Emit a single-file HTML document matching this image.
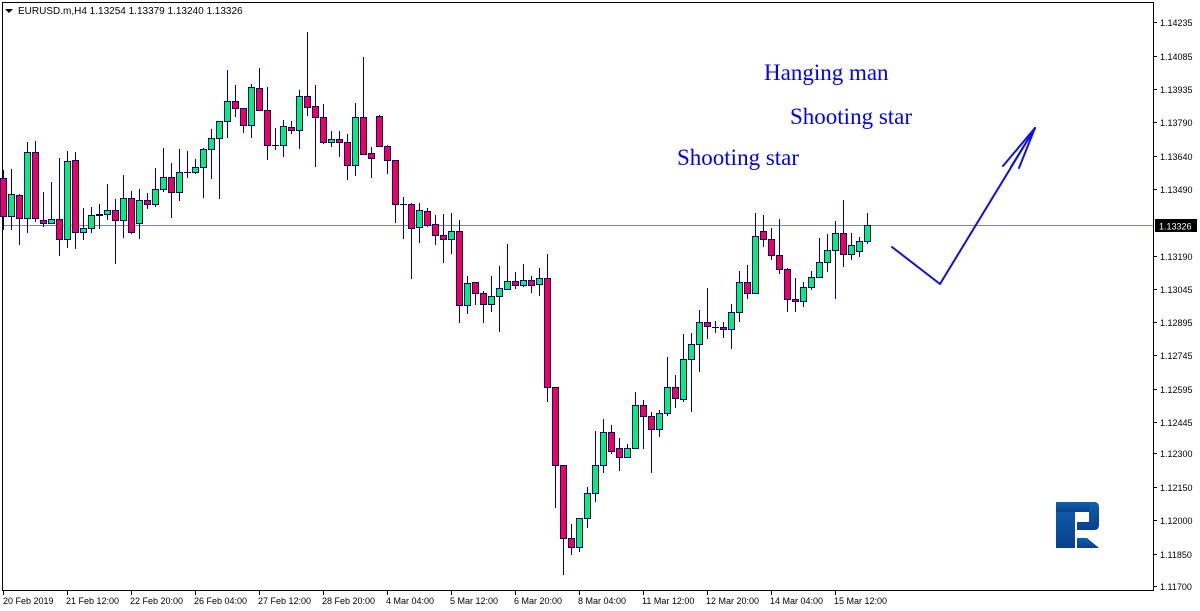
<!DOCTYPE html>
<html><head><meta charset="utf-8"><style>
html,body{margin:0;padding:0;background:#fff;width:1200px;height:611px;overflow:hidden}
svg{display:block}
.ax{font-family:"Liberation Sans",sans-serif;font-size:9px;fill:#000}
.g{fill:#00f07c;stroke:#000080;stroke-width:1}
.r{fill:#f0005a;stroke:#000080;stroke-width:1}
.lb{font-family:"Liberation Serif",serif;font-size:23px;fill:#0000ff}
</style></head><body>
<svg width="1200" height="611" viewBox="0 0 1200 611" xmlns="http://www.w3.org/2000/svg">
<rect x="2.5" y="2.5" width="1151" height="588" fill="#fff" stroke="#000" stroke-width="1"/>
<line x1="3" y1="225.5" x2="1153" y2="225.5" stroke="#808890" stroke-width="1"/>
<polygon points="5,9 13,9 9,13" fill="#000"/>
<text x="18" y="14" class="ax" style="font-size:10px">EURUSD.m,H4  1.13254 1.13379 1.13240 1.13326</text>
<path stroke="#000080" stroke-width="1" fill="none" d="M3.5 170V230M11.5 169V230M19.5 194V245M27.5 142V233M35.5 141V222M43.5 192V227M51.5 182V223M59.5 158V256M67.5 151V248M75.5 152V249M83.5 208V240M91.5 207V233M99.5 204V229M107.5 184V220M115.5 199V264M123.5 175V238M131.5 191V234M139.5 189V239M147.5 193V209M155.5 168V207M163.5 148V192M171.5 163V218M179.5 149V201M187.5 151V178M195.5 159V174M203.5 148V198M211.5 129V179M219.5 121V199M227.5 70V138M235.5 85V117M243.5 108V133M251.5 84V138M259.5 68V110M267.5 87V160M275.5 128V150M283.5 120V157M291.5 121V134M299.5 90V149M307.5 32V116M315.5 85V167M323.5 104V144M331.5 131V147M339.5 131V157M347.5 134V180M355.5 103V176M363.5 57V154M371.5 147V178M379.5 115V146M387.5 145V174M395.5 160V223M403.5 197V239M411.5 203V279M419.5 203V243M427.5 208V227M435.5 215V245M443.5 214V263M451.5 213V254M459.5 220V323M467.5 276V314M475.5 282V305M483.5 291V323M491.5 276V312M499.5 266V332M507.5 244V289M515.5 272V289M523.5 264V287M531.5 276V293M539.5 268V296M547.5 254V402M555.5 387V508M563.5 465V575M571.5 524V555M579.5 518V552M587.5 487V528M595.5 431V502M603.5 419V473M611.5 425V454M619.5 438V471M627.5 444V458M635.5 392V448M643.5 400V449M651.5 412V473M659.5 410V437M667.5 357V416M675.5 375V408M683.5 334V402M691.5 333V412M699.5 310V372M707.5 288V339M715.5 321V333M723.5 322V338M731.5 304V349M739.5 271V322M747.5 265V299M755.5 213V293M763.5 215V247M771.5 228V260M779.5 219V274M787.5 268V312M795.5 278V312M803.5 282V307M811.5 271V290M819.5 238V277M827.5 234V272M835.5 221V299M843.5 200V267M851.5 233V260M859.5 237V257M867.5 213V244"/>
<g>
<rect class="r" x="0.5" y="178.5" width="6" height="38"/>
<rect class="g" x="8.5" y="194.5" width="6" height="22"/>
<rect class="r" x="16.5" y="195.5" width="6" height="23"/>
<rect class="g" x="24.5" y="152.5" width="6" height="66"/>
<rect class="r" x="32.5" y="152.5" width="6" height="66"/>
<rect class="r" x="40.5" y="220.5" width="6" height="3"/>
<rect class="g" x="48.5" y="219.5" width="6" height="4"/>
<rect class="r" x="56.5" y="219.5" width="6" height="20"/>
<rect class="g" x="64.5" y="161.5" width="6" height="78"/>
<rect class="r" x="72.5" y="160.5" width="6" height="72"/>
<rect class="g" x="80.5" y="228.5" width="6" height="4"/>
<rect class="g" x="88.5" y="215.5" width="6" height="13"/>
<rect fill="#000080" x="96" y="214" width="7" height="2"/>
<rect class="g" x="104.5" y="210.5" width="6" height="4"/>
<rect class="r" x="112.5" y="210.5" width="6" height="10"/>
<rect class="g" x="120.5" y="198.5" width="6" height="22"/>
<rect class="r" x="128.5" y="198.5" width="6" height="34"/>
<rect class="g" x="136.5" y="200.5" width="6" height="23"/>
<rect class="r" x="144.5" y="200.5" width="6" height="4"/>
<rect class="g" x="152.5" y="189.5" width="6" height="15"/>
<rect class="g" x="160.5" y="177.5" width="6" height="12"/>
<rect class="r" x="168.5" y="177.5" width="6" height="15"/>
<rect class="g" x="176.5" y="172.5" width="6" height="20"/>
<rect fill="#000080" x="184" y="172" width="7" height="1"/>
<rect class="g" x="192.5" y="167.5" width="6" height="5"/>
<rect class="g" x="200.5" y="149.5" width="6" height="18"/>
<rect class="g" x="208.5" y="138.5" width="6" height="11"/>
<rect class="g" x="216.5" y="121.5" width="6" height="17"/>
<rect class="g" x="224.5" y="101.5" width="6" height="20"/>
<rect class="r" x="232.5" y="101.5" width="6" height="7"/>
<rect class="r" x="240.5" y="108.5" width="6" height="17"/>
<rect class="g" x="248.5" y="87.5" width="6" height="38"/>
<rect class="r" x="256.5" y="88.5" width="6" height="22"/>
<rect class="r" x="264.5" y="110.5" width="6" height="35"/>
<rect fill="#000080" x="272" y="145" width="7" height="1"/>
<rect class="g" x="280.5" y="126.5" width="6" height="19"/>
<rect class="r" x="288.5" y="127.5" width="6" height="3"/>
<rect class="g" x="296.5" y="96.5" width="6" height="34"/>
<rect class="r" x="304.5" y="96.5" width="6" height="11"/>
<rect class="r" x="312.5" y="106.5" width="6" height="11"/>
<rect class="r" x="320.5" y="117.5" width="6" height="25"/>
<rect class="g" x="328.5" y="139.5" width="6" height="3"/>
<rect class="r" x="336.5" y="139.5" width="6" height="3"/>
<rect class="r" x="344.5" y="142.5" width="6" height="23"/>
<rect class="g" x="352.5" y="117.5" width="6" height="48"/>
<rect class="r" x="360.5" y="117.5" width="6" height="37"/>
<rect class="r" x="368.5" y="153.5" width="6" height="5"/>
<rect class="r" x="376.5" y="116.5" width="6" height="30"/>
<rect class="r" x="384.5" y="146.5" width="6" height="14"/>
<rect class="r" x="392.5" y="160.5" width="6" height="44"/>
<rect fill="#000080" x="400" y="204" width="7" height="1"/>
<rect class="r" x="408.5" y="204.5" width="6" height="24"/>
<rect class="g" x="416.5" y="210.5" width="6" height="17"/>
<rect class="r" x="424.5" y="211.5" width="6" height="14"/>
<rect class="r" x="432.5" y="224.5" width="6" height="11"/>
<rect class="r" x="440.5" y="235.5" width="6" height="4"/>
<rect class="g" x="448.5" y="231.5" width="6" height="8"/>
<rect class="r" x="456.5" y="231.5" width="6" height="74"/>
<rect class="g" x="464.5" y="283.5" width="6" height="22"/>
<rect class="r" x="472.5" y="282.5" width="6" height="11"/>
<rect class="r" x="480.5" y="293.5" width="6" height="11"/>
<rect class="g" x="488.5" y="296.5" width="6" height="8"/>
<rect class="g" x="496.5" y="288.5" width="6" height="8"/>
<rect class="g" x="504.5" y="281.5" width="6" height="8"/>
<rect class="r" x="512.5" y="281.5" width="6" height="4"/>
<rect class="g" x="520.5" y="280.5" width="6" height="5"/>
<rect class="r" x="528.5" y="280.5" width="6" height="5"/>
<rect class="g" x="536.5" y="278.5" width="6" height="6"/>
<rect class="r" x="544.5" y="278.5" width="6" height="109"/>
<rect class="r" x="552.5" y="387.5" width="6" height="78"/>
<rect class="r" x="560.5" y="465.5" width="6" height="73"/>
<rect class="r" x="568.5" y="538.5" width="6" height="9"/>
<rect class="g" x="576.5" y="518.5" width="6" height="29"/>
<rect class="g" x="584.5" y="493.5" width="6" height="25"/>
<rect class="g" x="592.5" y="465.5" width="6" height="28"/>
<rect class="g" x="600.5" y="432.5" width="6" height="33"/>
<rect class="r" x="608.5" y="432.5" width="6" height="19"/>
<rect class="r" x="616.5" y="448.5" width="6" height="9"/>
<rect class="g" x="624.5" y="448.5" width="6" height="9"/>
<rect class="g" x="632.5" y="405.5" width="6" height="43"/>
<rect class="r" x="640.5" y="405.5" width="6" height="11"/>
<rect class="r" x="648.5" y="416.5" width="6" height="13"/>
<rect class="g" x="656.5" y="413.5" width="6" height="16"/>
<rect class="g" x="664.5" y="387.5" width="6" height="26"/>
<rect class="r" x="672.5" y="387.5" width="6" height="11"/>
<rect class="g" x="680.5" y="359.5" width="6" height="40"/>
<rect class="g" x="688.5" y="344.5" width="6" height="15"/>
<rect class="g" x="696.5" y="322.5" width="6" height="22"/>
<rect class="r" x="704.5" y="322.5" width="6" height="4"/>
<rect fill="#000080" x="712" y="327" width="7" height="1"/>
<rect class="r" x="720.5" y="327.5" width="6" height="2"/>
<rect class="g" x="728.5" y="312.5" width="6" height="17"/>
<rect class="g" x="736.5" y="282.5" width="6" height="30"/>
<rect class="r" x="744.5" y="282.5" width="6" height="11"/>
<rect class="g" x="752.5" y="236.5" width="6" height="57"/>
<rect class="r" x="760.5" y="231.5" width="6" height="8"/>
<rect class="r" x="768.5" y="239.5" width="6" height="16"/>
<rect class="r" x="776.5" y="255.5" width="6" height="14"/>
<rect class="r" x="784.5" y="269.5" width="6" height="30"/>
<rect class="r" x="792.5" y="299.5" width="6" height="2"/>
<rect class="g" x="800.5" y="287.5" width="6" height="14"/>
<rect class="g" x="808.5" y="277.5" width="6" height="10"/>
<rect class="g" x="816.5" y="262.5" width="6" height="15"/>
<rect class="g" x="824.5" y="250.5" width="6" height="12"/>
<rect class="g" x="832.5" y="233.5" width="6" height="17"/>
<rect class="r" x="840.5" y="233.5" width="6" height="21"/>
<rect class="g" x="848.5" y="245.5" width="6" height="9"/>
<rect class="g" x="856.5" y="241.5" width="6" height="10"/>
<rect class="g" x="864.5" y="225.5" width="6" height="16"/>
</g>
<text x="764" y="80" class="lb">Hanging man</text>
<text x="790" y="124" class="lb">Shooting star</text>
<text x="677" y="165" class="lb">Shooting star</text>
<g stroke="#1010e0" stroke-width="2" fill="none" stroke-linecap="round" stroke-linejoin="round">
<polyline points="892,247 940,284 1035,128"/>
<line x1="1035" y1="128" x2="1003" y2="166"/>
<line x1="1035" y1="128" x2="1019" y2="168"/>
<line x1="1035" y1="128" x2="1011" y2="167"/>
</g>
<defs><linearGradient id="lg" x1="0" y1="0" x2="0" y2="1"><stop offset="0" stop-color="#1060b0"/><stop offset="1" stop-color="#083f8c"/></linearGradient></defs>
<g fill="url(#lg)">
<rect x="1056" y="502" width="19" height="46"/>
<rect x="1056" y="502" width="40" height="10"/>
<path d="M1089 502H1094Q1099 502 1099 507V525Q1099 530 1094 530H1077V522H1089Z"/>
<polygon points="1077,538 1087,538 1099,548 1077,548"/>
</g>
<g stroke="#000" stroke-width="1">
<path d="M1153 22.5h4M1153 56.5h4M1153 89.5h4M1153 122.5h4M1153 156.5h4M1153 189.5h4M1153 256.5h4M1153 289.5h4M1153 322.5h4M1153 355.5h4M1153 389.5h4M1153 422.5h4M1153 453.5h4M1153 487.5h4M1153 520.5h4M1153 554.5h4M1153 586.5h4"/>
<path d="M3.5 590v5M67.5 590v5M131.5 590v5M195.5 590v5M259.5 590v5M323.5 590v5M387.5 590v5M451.5 590v5M515.5 590v5M579.5 590v5M643.5 590v5M707.5 590v5M771.5 590v5M835.5 590v5"/>
</g>
<g class="ax">
<text x="1160" y="26">1.14235</text>
<text x="1160" y="60">1.14085</text>
<text x="1160" y="93">1.13935</text>
<text x="1160" y="126">1.13790</text>
<text x="1160" y="160">1.13640</text>
<text x="1160" y="193">1.13490</text>
<text x="1160" y="260">1.13190</text>
<text x="1160" y="293">1.13045</text>
<text x="1160" y="326">1.12895</text>
<text x="1160" y="359">1.12745</text>
<text x="1160" y="393">1.12595</text>
<text x="1160" y="426">1.12445</text>
<text x="1160" y="457">1.12300</text>
<text x="1160" y="491">1.12150</text>
<text x="1160" y="524">1.12000</text>
<text x="1160" y="558">1.11850</text>
<text x="1160" y="590">1.11700</text>
</g>
<rect x="1155" y="219" width="42" height="13" fill="#000"/>
<text x="1159" y="229.5" class="ax" style="fill:#fff">1.13326</text>
<g class="ax">
<text x="3" y="604">20 Feb 2019</text>
<text x="66" y="604">21 Feb 12:00</text>
<text x="130" y="604">22 Feb 20:00</text>
<text x="194" y="604">26 Feb 04:00</text>
<text x="258" y="604">27 Feb 12:00</text>
<text x="322" y="604">28 Feb 20:00</text>
<text x="386" y="604">4 Mar 04:00</text>
<text x="450" y="604">5 Mar 12:00</text>
<text x="514" y="604">6 Mar 20:00</text>
<text x="578" y="604">8 Mar 04:00</text>
<text x="642" y="604">11 Mar 12:00</text>
<text x="706" y="604">12 Mar 20:00</text>
<text x="770" y="604">14 Mar 04:00</text>
<text x="834" y="604">15 Mar 12:00</text>
</g>
</svg>
</body></html>
